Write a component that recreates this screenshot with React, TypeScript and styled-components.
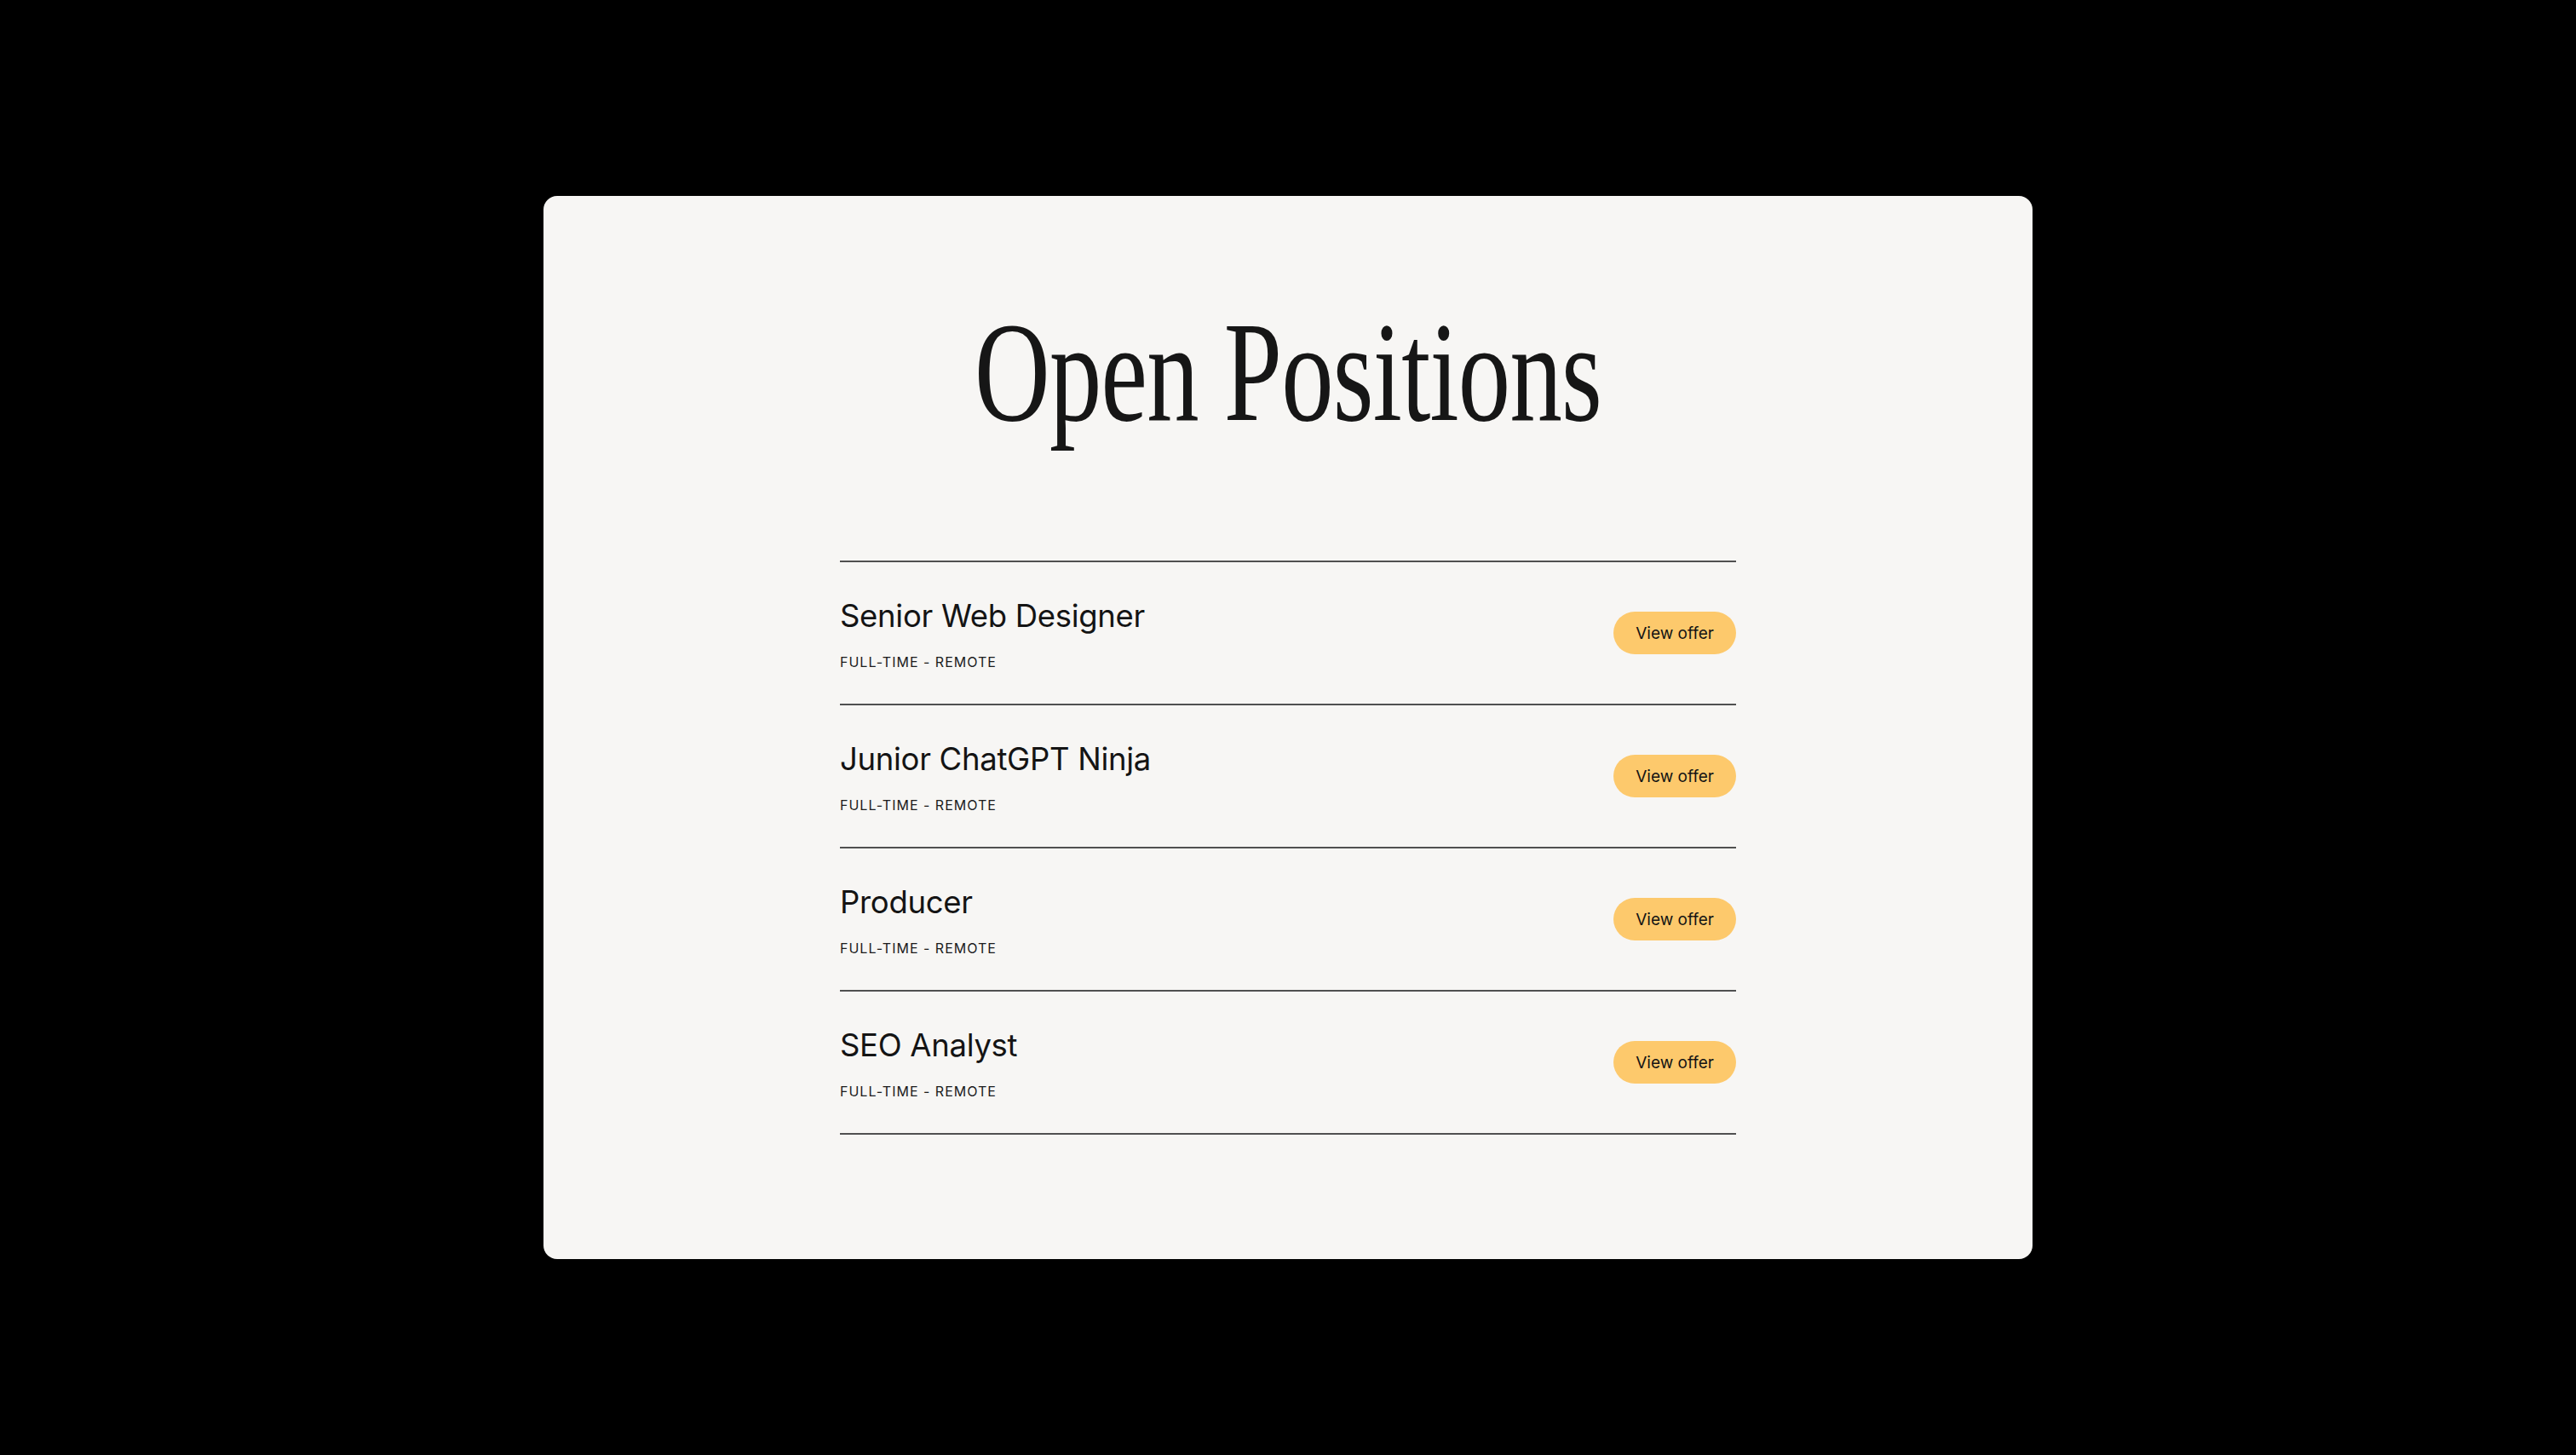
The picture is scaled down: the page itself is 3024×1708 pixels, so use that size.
import React from "react";
import styled, { createGlobalStyle } from "styled-components";

const GlobalStyle = createGlobalStyle`
  html, body {
    margin: 0;
    padding: 0;
    background: #000;
  }
  * {
    box-sizing: border-box;
  }
`;

const Page = styled.div`
  min-height: 100vh;
  display: flex;
  align-items: center;
  justify-content: center;
`;

const Card = styled.section`
  width: 1748px;
  height: 1248px;
  background: #f7f6f4;
  border-radius: 16px;
  padding: 122px 0 0;
  display: flex;
  flex-direction: column;
  align-items: center;
`;

const Heading = styled.h1<{ squeeze: number }>`
  margin: 0;
  font-family: "Liberation Serif", "Times New Roman", serif;
  font-weight: 400;
  font-size: 168px;
  line-height: 1;
  color: #161616;
  letter-spacing: -1px;
  white-space: nowrap;
  transform: scaleX(${({ squeeze }) => squeeze});
  transform-origin: center;
`;

const List = styled.ul`
  list-style: none;
  margin: 138px 0 0;
  padding: 0;
  width: 1052px;
  border-top: 2px solid #505050;
`;

const Row = styled.li`
  height: 168px;
  border-bottom: 2px solid #505050;
  display: flex;
  align-items: center;
  justify-content: space-between;
`;

const Info = styled.div`
  display: flex;
  flex-direction: column;
  gap: 23px;
  padding-top: 3px;
`;

const JobTitle = styled.h2`
  margin: 0;
  font-family: Inter, "Liberation Sans", sans-serif;
  font-weight: 400;
  font-size: 36.5px;
  line-height: 1.2;
  color: #141414;
  letter-spacing: -0.3px;
`;

const Meta = styled.span`
  font-family: Inter, "Liberation Sans", sans-serif;
  font-size: 16px;
  line-height: 1.2;
  letter-spacing: 1px;
  text-transform: uppercase;
  color: #1c1c1c;
`;

const OfferButton = styled.button`
  height: 50px;
  padding: 0 26px;
  border: none;
  border-radius: 25px;
  background: #fdc96c;
  color: #141414;
  font-family: Inter, "Liberation Sans", sans-serif;
  font-size: 19px;
  line-height: 1;
  cursor: pointer;
`;

const positions = [
  { id: 1, title: "Senior Web Designer", meta: "Full-time - Remote" },
  { id: 2, title: "Junior ChatGPT Ninja", meta: "Full-time - Remote" },
  { id: 3, title: "Producer", meta: "Full-time - Remote" },
  { id: 4, title: "SEO Analyst", meta: "Full-time - Remote" },
];

const App: React.FC = () => {
  return (
    <>
      <GlobalStyle />
      <Page>
        <Card>
          <Heading squeeze={0.73}>Open Positions</Heading>
          <List>
            {positions.map((job) => (
              <Row key={job.id}>
                <Info>
                  <JobTitle>{job.title}</JobTitle>
                  <Meta>{job.meta}</Meta>
                </Info>
                <OfferButton>View offer</OfferButton>
              </Row>
            ))}
          </List>
        </Card>
      </Page>
    </>
  );
};

export default App;
